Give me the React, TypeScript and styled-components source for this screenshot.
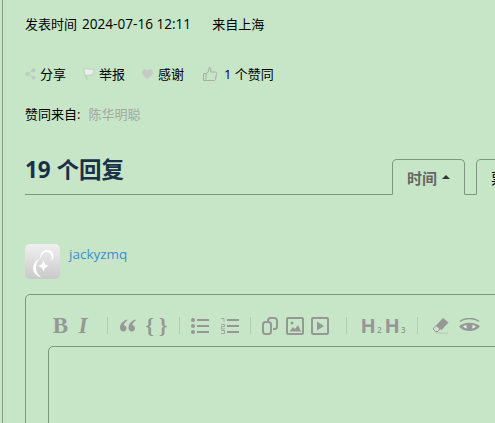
import React from 'react';
import styled, { createGlobalStyle } from 'styled-components';

const GlobalStyle = createGlobalStyle`
  html, body {
    margin: 0;
    padding: 0;
    background: #c7e6c7;
    font-family: "Open Sans", "Noto Sans CJK SC", sans-serif;
    font-size: 13px;
    color: #000;
    overflow: hidden;
  }
`;

const Page = styled.div`
  width: 493px;
  height: 423px;
  box-sizing: border-box;
  margin-left: 2px;
  padding: 14px 0 0 22px;
  border-left: 1px solid #8a9a8a;
  overflow: hidden;
`;

const MetaRow = styled.div`
  display: flex;
  gap: 21px;
  height: 20px;
  line-height: 20px;
`;

const DateText = styled.span`
  margin-left: 5px;
  font-size: 13.6px;
`;

const Actions = styled.div`
  display: flex;
  align-items: center;
  height: 20px;
  margin-top: 30px;
  line-height: 20px;
`;

const Action = styled.span<{ $w: number; $gap: number }>`
  display: flex;
  align-items: center;
  flex: none;
  width: ${(p) => p.$w}px;
  gap: ${(p) => p.$gap}px;

  svg {
    flex: none;
  }
`;

const Voters = styled.div`
  height: 20px;
  margin-top: 20px;
  line-height: 20px;
`;

const VoterName = styled.span`
  margin-left: 8px;
  color: #a3a8a3;
`;

const ReplyHeader = styled.div`
  display: flex;
  justify-content: space-between;
  align-items: flex-end;
  width: 520px;
  height: 35px;
  margin-top: 35px;
  border-bottom: 1px solid #7f9580;
`;

const ReplyTitle = styled.h2`
  margin: 0 0 7px;
  font-size: 22.5px;
  line-height: 34px;
  font-weight: 700;
  color: #1a3049;
`;

const Tabs = styled.div`
  display: flex;
  gap: 11px;
  margin-bottom: -1px;
`;

const Tab = styled.div<{ $active?: boolean }>`
  display: flex;
  align-items: center;
  gap: 5px;
  box-sizing: border-box;
  width: ${(p) => (p.$active ? '73px' : '69px')};
  height: 36px;
  padding: 0 0 0 14px;
  border: 1px solid #7f9580;
  border-bottom: 1px solid #c7e6c7;
  border-radius: 5px 5px 0 0;
  font-size: 15px;
  font-weight: ${(p) => (p.$active ? 700 : 400)};
  white-space: nowrap;
  color: ${(p) => (p.$active ? '#666' : '#000')};
`;

const Caret = styled.span`
  width: 0;
  height: 0;
  border-left: 4px solid transparent;
  border-right: 4px solid transparent;
  border-bottom: 4px solid #333;
`;

const Author = styled.div`
  display: flex;
  align-items: flex-start;
  gap: 9px;
  margin-top: 49px;
`;

const Avatar = styled.div`
  width: 35px;
  height: 35px;
  border-radius: 5px;
  overflow: hidden;
  background: linear-gradient(#f0f0f0, #c9c9c9);
`;

const AuthorName = styled.a`
  margin-top: 1px;
  line-height: 18px;
  font-size: 13.5px;
  color: #3a8fd3;
`;

const EditorBox = styled.div`
  box-sizing: border-box;
  width: 520px;
  height: 180px;
  margin-top: 15px;
  padding: 0 0 0 22px;
  border: 1px solid #7f9580;
  border-radius: 5px;
`;

const Toolbar = styled.div`
  display: flex;
  align-items: center;
  height: 51px;
  padding-top: 10px;
  box-sizing: border-box;
  color: #959895;
`;

const Tool = styled.span<{ $ml: number; $w: number }>`
  display: flex;
  align-items: center;
  justify-content: center;
  flex: none;
  width: ${(p) => p.$w}px;
  height: 20px;
  margin-left: ${(p) => p.$ml}px;
`;

const Glyph = styled(Tool)<{ $italic?: boolean; $size?: number }>`
  font-family: "Liberation Serif", serif;
  font-weight: 700;
  font-size: ${(p) => p.$size ?? 23}px;
  font-style: ${(p) => (p.$italic ? 'italic' : 'normal')};
  line-height: 20px;
  white-space: nowrap;
`;

const Heading = styled(Tool)`
  font-family: "Open Sans", sans-serif;
  font-weight: 700;
  font-size: 20px;
  line-height: 20px;
  align-items: baseline;

  sub {
    font-size: 8px;
    line-height: 0;
    font-weight: 600;
    vertical-align: baseline;
    margin-left: 1px;
  }
`;

const Divider = styled.span<{ $ml: number }>`
  flex: none;
  width: 1px;
  height: 17px;
  margin-left: ${(p) => p.$ml}px;
  background: #b5c9b5;
`;

const EditorArea = styled.div`
  width: 100%;
  height: 130px;
  box-sizing: border-box;
  border: 1px solid #7f9580;
  border-radius: 5px 0 0 0;
`;

const ShareIcon = () => (
  <svg width="11" height="12" viewBox="0 0 11 12" fill="#c2c8c2" stroke="#c2c8c2">
    <path d="M2.5 6 8 2.5M2.5 6 8 9.5" fill="none" />
    <circle cx="2.2" cy="6" r="1.6" />
    <circle cx="8.5" cy="2.3" r="1.6" />
    <circle cx="8.5" cy="9.7" r="1.6" />
  </svg>
);

const FlagIcon = () => (
  <svg width="12" height="12" viewBox="0 0 12 12">
    <path d="M.5 1C3 0 6 2 11.500 1L9.500 7C7 8 5 6.500 3 7.500L4.500 11.500H3.500Z" fill="#e8efe8" stroke="#b8c4b8" strokeWidth=".7" />
  </svg>
);

const HeartIcon = () => (
  <svg width="11" height="10" viewBox="0 0 11 10">
    <path d="M5.500 10C3 8 0 6 0 3a2.900 2.900 0 0 1 5.500-1.200A2.900 2.900 0 0 1 11 3c0 3-3 5-5.500 7Z" fill="#c6cac6" />
  </svg>
);

const ThumbIcon = () => (
  <svg width="14" height="14" viewBox="0 0 14 14" fill="none" stroke="#a3b0a3">
    <path d="M.5 6.500h2.500v7H.5zM3 7c1.500-.8 3-2.500 3.200-6.500 1.500 0 2 1.500 1.500 4.500h5c1 0 1 1 .8 1.500l-1 6c-.2.700-.5 1-1.200 1H3" />
  </svg>
);

const QuoteIcon = () => (
  <svg width="16" height="13" viewBox="0 0 16 13" fill="currentColor">
    <path d="M7 .5C3 2 .3 4.500 0 8.500 0 11 1.500 12.500 3.300 12.500 5.300 12.500 6.500 11 6.500 9.300S5.300 6.500 3.800 6.300C4 4.500 5.300 2.800 7.300 1.500Z" />
    <path d="M15.500.5C11.500 2 8.800 4.500 8.500 8.500 8.500 11 10 12.500 11.800 12.500 13.800 12.500 15 11 15 9.300S13.800 6.500 12.300 6.300C12.500 4.500 13.800 2.800 15.800 1.500Z" />
  </svg>
);

const BulletIcon = () => (
  <svg width="18" height="16" viewBox="0 0 18 16" fill="currentColor">
    <circle cx="2" cy="2" r="2" />
    <circle cx="2" cy="8" r="2" />
    <circle cx="2" cy="14" r="2" />
    <rect x="6" y="1" width="12" height="2" />
    <rect x="6" y="7" width="12" height="2" />
    <rect x="6" y="13" width="12" height="2" />
  </svg>
);

const NumberedIcon = () => (
  <svg width="18" height="16" viewBox="0 0 18 16" fill="none" stroke="currentColor">
    <path d="M0 .5h3v3M0 6.500h3.500v2H.500v2.500h3.500M0 12.500h3.500v3H0" strokeWidth=".8" />
    <path d="M6 2h12M6 8h12M6 14h12" strokeWidth="2" />
  </svg>
);

const LinkIcon = () => (
  <svg width="16" height="18" viewBox="0 0 16 18" fill="none" stroke="currentColor" strokeWidth="2">
    <rect x="1" y="5" width="8" height="12" rx="2.500" />
    <path d="M6 5V3.500A2.500 2.500 0 0 1 8.500 1h4A2.500 2.500 0 0 1 15 3.500v6a2.500 2.500 0 0 1-2.500 2.500H11" />
  </svg>
);

const ImageIcon = () => (
  <svg width="18" height="18" viewBox="0 0 18 18">
    <rect x="1" y="1" width="16" height="16" rx="1" fill="none" stroke="currentColor" strokeWidth="2" />
    <circle cx="6" cy="6" r="1.500" fill="currentColor" />
    <path d="M3.500 14.500 7 10l2 2 3-4 3 6.500Z" fill="currentColor" />
  </svg>
);

const PlayIcon = () => (
  <svg width="18" height="18" viewBox="0 0 18 18">
    <rect x="1" y="1" width="16" height="16" rx="1" fill="none" stroke="currentColor" strokeWidth="2" />
    <path d="M6 4.500 13 9l-7 4.500Z" fill="currentColor" />
  </svg>
);

const EraserIcon = () => (
  <svg width="17" height="18" viewBox="0 0 17 18">
    <path d="M11 1 16.500 5.500 9.500 13 4 8.500Z" fill="currentColor" />
    <path d="M4 8.500 8 12 6 14.500H3.500L1 12Z" fill="#d5dcd5" stroke="currentColor" />
    <path d="M3 16h13" stroke="#b5c4b5" />
  </svg>
);

const EyeIcon = () => (
  <svg width="21" height="15" viewBox="0 0 21 15">
    <path d="M1 3.500C6-.500 15-.500 20 3.500" fill="none" stroke="currentColor" strokeWidth="1.500" />
    <path d="M0 8.500C5 3.500 16 3.500 21 8.500 16 14.500 5 14.500 0 8.500Z" fill="currentColor" />
    <path d="M4 8.500c3-2.500 10-2.500 13 0-3 3-10 3-13 0Z" fill="#e8eee8" />
    <circle cx="10.500" cy="8.500" r="3" fill="currentColor" />
  </svg>
);

const AvatarMark = () => (
  <svg width="35" height="35" viewBox="0 0 35 35" fill="#fff">
    <path d="M15 14C10 17 7 22 8.500 27c1 3 4 5.500 8 6.500-3.500-2.500-5.500-6-5.500-10.500 0-3 1.500-6.500 4-9Z" />
    <path d="M15 14c0-4 3-8 7.500-8 4 0 6.500 3 6 7-.2 1.500-1 3-2.500 4 .8-1.500 1-3 .5-5-.6-2.500-2.300-4-4.500-4-3 0-5.500 2.500-6.500 6Z" />
    <path d="M18.500 16c.5 3.500 2 5 5.500 6-3.500.8-5 2.500-5.500 6-.5-3.500-2-5.200-5.500-6 3.500-1 5-2.500 5.500-6Z" />
  </svg>
);

const App: React.FC = () => {
  return (
    <Page>
      <GlobalStyle />
      <MetaRow>
        <span>
          发表时间<DateText>2024-07-16 12:11</DateText>
        </span>
        <span>来自上海</span>
      </MetaRow>
      <Actions>
        <Action $w={58} $gap={4}>
          <ShareIcon />
          分享
        </Action>
        <Action $w={59} $gap={4}>
          <FlagIcon />
          举报
        </Action>
        <Action $w={61} $gap={5}>
          <HeartIcon />
          感谢
        </Action>
        <Action $w={90} $gap={7}>
          <ThumbIcon />1 个赞同
        </Action>
      </Actions>
      <Voters>
        赞同来自:
        <VoterName>陈华明聪</VoterName>
      </Voters>
      <ReplyHeader>
        <ReplyTitle>19 个回复</ReplyTitle>
        <Tabs>
          <Tab $active>
            时间
            <Caret />
          </Tab>
          <Tab>票数</Tab>
        </Tabs>
      </ReplyHeader>
      <Author>
        <Avatar>
          <AvatarMark />
        </Avatar>
        <AuthorName>jackyzmq</AuthorName>
      </Author>
      <EditorBox>
        <Toolbar>
          <Glyph $ml={5} $w={15}>B</Glyph>
          <Glyph $ml={10} $w={10} $italic>I</Glyph>
          <Divider $ml={19} />
          <Tool $ml={12} $w={16}><QuoteIcon /></Tool>
          <Glyph $ml={10} $w={21} $size={21}>{'{ }'}</Glyph>
          <Divider $ml={12} />
          <Tool $ml={11} $w={18}><BulletIcon /></Tool>
          <Tool $ml={12} $w={18}><NumberedIcon /></Tool>
          <Divider $ml={11} />
          <Tool $ml={11} $w={16}><LinkIcon /></Tool>
          <Tool $ml={8} $w={18}><ImageIcon /></Tool>
          <Tool $ml={7} $w={18}><PlayIcon /></Tool>
          <Divider $ml={17} />
          <Heading $ml={14} $w={20}>H<sub>2</sub></Heading>
          <Heading $ml={4} $w={20}>H<sub>3</sub></Heading>
          <Divider $ml={12} />
          <Tool $ml={14} $w={17}><EraserIcon /></Tool>
          <Tool $ml={10} $w={21}><EyeIcon /></Tool>
        </Toolbar>
        <EditorArea />
      </EditorBox>
    </Page>
  );
};

export default App;
